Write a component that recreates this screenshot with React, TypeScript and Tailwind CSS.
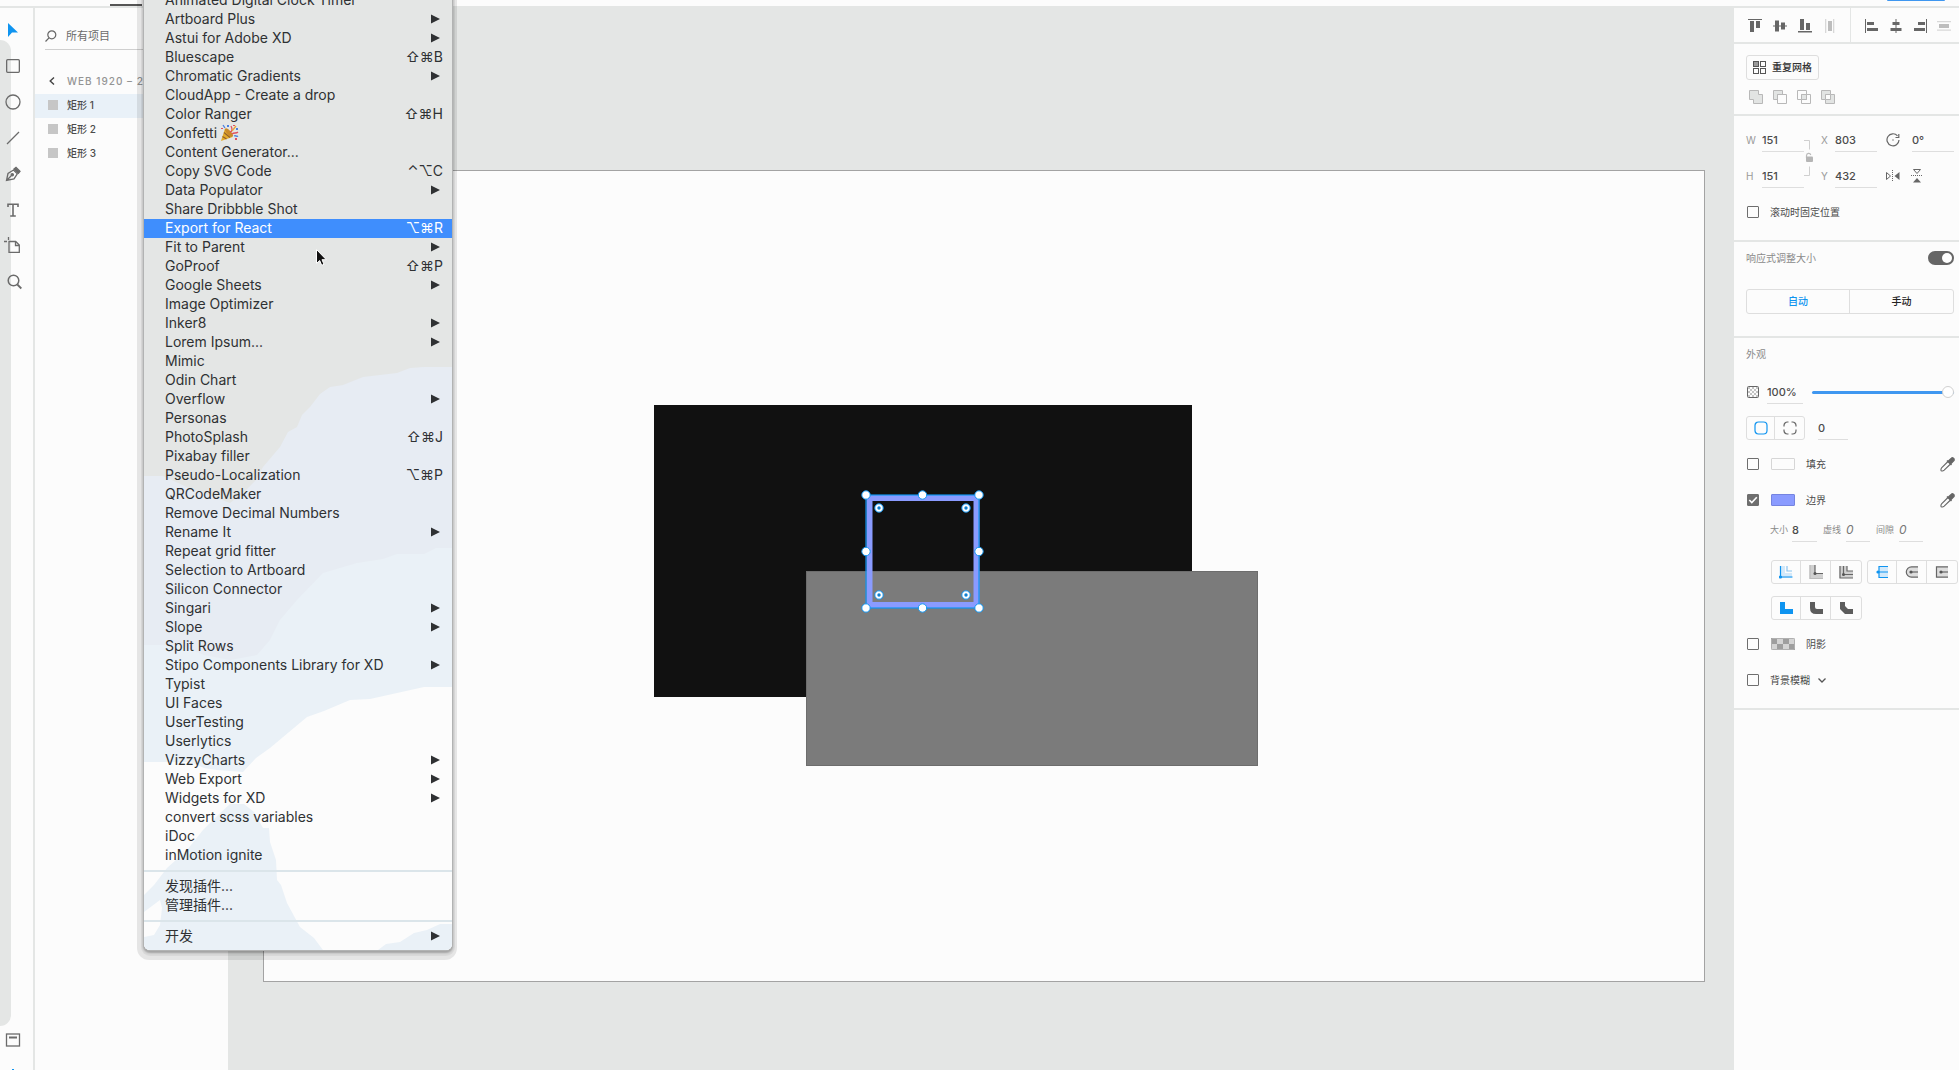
import type { ReactNode } from "react";

type Item = { label: string; keys?: string; sub?: boolean; active?: boolean; party?: boolean };

const plugins: Item[] = [
  { label: "Animated Digital Clock Timer" },
  { label: "Artboard Plus", sub: true },
  { label: "Astui for Adobe XD", sub: true },
  { label: "Bluescape", keys: "⇧⌘B" },
  { label: "Chromatic Gradients", sub: true },
  { label: "CloudApp - Create a drop" },
  { label: "Color Ranger", keys: "⇧⌘H" },
  { label: "Confetti", party: true },
  { label: "Content Generator..." },
  { label: "Copy SVG Code", keys: "⌃⌥C" },
  { label: "Data Populator", sub: true },
  { label: "Share Dribbble Shot" },
  { label: "Export for React", keys: "⌥⌘R", active: true },
  { label: "Fit to Parent", sub: true },
  { label: "GoProof", keys: "⇧⌘P" },
  { label: "Google Sheets", sub: true },
  { label: "Image Optimizer" },
  { label: "Inker8", sub: true },
  { label: "Lorem Ipsum...", sub: true },
  { label: "Mimic" },
  { label: "Odin Chart" },
  { label: "Overflow", sub: true },
  { label: "Personas" },
  { label: "PhotoSplash", keys: "⇧⌘J" },
  { label: "Pixabay filler" },
  { label: "Pseudo-Localization", keys: "⌥⌘P" },
  { label: "QRCodeMaker" },
  { label: "Remove Decimal Numbers" },
  { label: "Rename It", sub: true },
  { label: "Repeat grid fitter" },
  { label: "Selection to Artboard" },
  { label: "Silicon Connector" },
  { label: "Singari", sub: true },
  { label: "Slope", sub: true },
  { label: "Split Rows" },
  { label: "Stipo Components Library for XD", sub: true },
  { label: "Typist" },
  { label: "UI Faces" },
  { label: "UserTesting" },
  { label: "Userlytics" },
  { label: "VizzyCharts", sub: true },
  { label: "Web Export", sub: true },
  { label: "Widgets for XD", sub: true },
  { label: "convert scss variables" },
  { label: "iDoc" },
  { label: "inMotion ignite" },
];

function Popper() {
  return (
    <svg width="19" height="18" viewBox="0 0 19 18" role="img" aria-label="🎉">
      <path d="M1 17 5 4.500Q10 7 12.500 13z" fill="#e3ab2c" />
      <path d="M2.500 12.500l4 2.500M4 8.500l6 5M6 6l5 6" stroke="#94602a" strokeWidth="1.200" />
      <ellipse cx="9" cy="8.600" rx="5.400" ry="2" transform="rotate(48 9 8.600)" fill="#c98a2a" />
      <path d="M10 8c3-1 2-4 1-6M12 10c2-2 4 0 6-2" fill="none" stroke="#e0525f" strokeWidth="1.300" />
      <path d="M3 1l2 3M14 12c2-1 3 1 4 0" fill="none" stroke="#4a7fe0" strokeWidth="1.300" />
      <path d="M12 7l4-5" stroke="#e8a33a" strokeWidth="1.300" />
      <g fill="#4a7fe0"><rect x="7" y="1" width="2" height="2" /><rect x="16" y="4" width="2" height="2" /></g>
      <g fill="#e0525f"><rect x="1" y="4" width="2" height="1" /><rect x="13" y="1" width="2" height="1" /><rect x="15" y="14" width="2" height="2" /></g>
    </svg>
  );
}

function MenuItem({ item }: { item: Item }) {
  return (
    <li role="none">
      <button
        type="button"
        role="menuitem"
        className={
          item.active
            ? "flex h-[19px] w-full items-center bg-[#3f8efd] pb-[2px] pl-[21px] pr-[9px] text-left text-white"
            : "flex h-[19px] w-full items-center pb-[2px] pl-[21px] pr-[9px] text-left"
        }
      >
        <span className="whitespace-nowrap">{item.label}</span>
        {item.party && <span className="ml-[3px]"><Popper /></span>}
        {item.keys && <span className="ml-auto">{item.keys}</span>}
        {item.sub && (
          <svg className="ml-auto mr-[3px]" width="9" height="10" viewBox="0 0 9 10" aria-hidden="true">
            <path d="M0 .5v9L9 5z" fill="currentColor" />
          </svg>
        )}
      </button>
    </li>
  );
}

function MenuRule() {
  return (
    <li role="separator" className="h-3 pt-[5px]">
      <div className="h-[2px] bg-[#dbe5ea]" />
    </li>
  );
}

function PluginMenu() {
  return (
    <div className="absolute -top-[9px] left-[144px] w-[308px] rounded-b-md bg-[#e4e6e5] text-sm leading-[19px] text-[#2f3133] shadow-[0_0_0_1px_#b2b3b3,0_2px_2px_1px_rgba(0,0,0,0.25),0_3px_0_3px_rgba(0,0,0,0.05),-1px_4px_0_6px_rgba(0,0,0,0.09)]">
      <svg className="absolute inset-0 h-full w-full rounded-b-md" viewBox="0 0 308 959" preserveAspectRatio="none" aria-hidden="true">
        <g transform="translate(0 9)">
          <path fill="#e7ecf3" d="M0 476H19L45 488 70 497 86 503 100 492 112 480 119 467 136 447 144 432 153 427 158 415 166 407 176 394 186 387 199 385 219 377 253 373 266 368 280 367H308V950H0z" />
          <path fill="#eaf1f7" d="M0 645H36L60 655 86 660 113 655 126 640 136 620 153 600 179 573 213 563 239 559 253 554H280L292 548H308V950H0z" />
          <path fill="#fcfcfc" d="M0 762H46L60 768 73 770 99 772 112 758 126 748 163 717 180 711 206 700 226 699 253 693 280 687H308V950H0z" />
          <path fill="#eaf1f7" d="M0 895 10 885 23 868 43 850 59 830 73 816 86 804H100L110 812 119 828H125L126 842 132 860 133 880 137 885 143 903 156 927 170 938 179 950H0V937L10 935 16 925 18 908 16 900 0 912zM234 950 242 944 256 942 270 933 283 930 296 924H308V950z" />
        </g>
      </svg>
      <ul role="menu" className="relative pb-1">
        {plugins.map((p) => <MenuItem key={p.label} item={p} />)}
        <MenuRule />
        <MenuItem item={{ label: "发现插件..." }} />
        <MenuItem item={{ label: "管理插件..." }} />
        <MenuRule />
        <MenuItem item={{ label: "开发", sub: true }} />
      </ul>
    </div>
  );
}

function Tool({ name, children }: { name: string; children: ReactNode }) {
  return (
    <button type="button" aria-label={name} className="flex h-9 w-[26px] items-center justify-center">
      <svg width="18" height="18" viewBox="0 0 18 18" fill="none" stroke="#6b6b6b" strokeWidth="1.300">
        {children}
      </svg>
    </button>
  );
}

function Toolbar() {
  return (
    <nav aria-label="工具" className="relative flex w-[35px] shrink-0 flex-col border-r-2 border-[#e4e6e5] pt-1">
      <div className="absolute bottom-11 left-0 top-8 w-[11px] rounded-r-[11px] bg-[#e4e6e5]" />
      <div className="relative flex flex-1 flex-col">
        <Tool name="选择"><path d="M4 2v14l4-4.500h6z" fill="#0f94f0" stroke="none" /></Tool>
        <Tool name="矩形"><rect x="2.650" y="2.650" width="12.700" height="12.700" rx="1" /></Tool>
        <Tool name="椭圆"><circle cx="9" cy="9" r="7" /></Tool>
        <Tool name="直线"><path d="M3 15 15 3" /></Tool>
        <Tool name="钢笔">
          <path d="M2.500 15.500 4 8.500l5.500-3.500 3.800 3.800-3.300 5zM2.500 15.500l5-5" />
          <circle cx="8.300" cy="9.700" r="1.100" fill="#6b6b6b" />
          <path d="m10 4 2-1.600 4 4L14.400 8.300z" fill="#6b6b6b" />
        </Tool>
        <Tool name="文本"><path d="M4 6V3.200h10V6M9 3.200V15M6.200 15h5.600" strokeWidth="1.600" /></Tool>
        <Tool name="画板"><path d="M5 4.500h6.700l3.600 3.600v7.200H5zM11.500 4.500v4h4M4.500 0v3M0 4.500h3" /></Tool>
        <Tool name="缩放"><circle cx="9.500" cy="7.500" r="5.300" strokeWidth="1.500" /><path d="m13.300 11.500 4 4" strokeWidth="1.800" /></Tool>
        <div className="mt-auto pb-3">
          <Tool name="图层"><rect x="2.500" y="3" width="13" height="12" /><path d="M5 6.500h8" strokeWidth="2" /></Tool>
        </div>
        <span className="absolute bottom-0 left-3 h-px w-[2px] bg-[#0f94f0]" />
      </div>
    </nav>
  );
}

function Layers() {
  return (
    <aside className="w-[193px] shrink-0">
      <label className="ml-[10px] mt-[15px] flex h-[27px] items-center border-b border-[#cfcfcf]">
        <svg width="12" height="12" viewBox="0 0 12 12" fill="none" stroke="#666" strokeWidth="1.200" aria-hidden="true">
          <circle cx="6.800" cy="4.800" r="4" /><path d="M4 7.800.5 11.500" />
        </svg>
        <input aria-label="搜索" placeholder="所有项目" className="ml-[9px] w-20 bg-transparent text-[11px] text-[#6b6b6b] outline-none placeholder:text-[#6b6b6b]" />
      </label>
      <button type="button" className="ml-[14px] mt-[18px] flex h-[26px] items-center text-[10px] font-medium tracking-widest text-[#949494]">
        <svg width="6" height="8" viewBox="0 0 6 8" fill="none" stroke="#444" strokeWidth="1.400" aria-hidden="true"><path d="M5 .5 1.200 4 5 7.500" /></svg>
        <span className="ml-3 whitespace-nowrap">WEB 1920 – 2</span>
      </button>
      <ul>
        {["矩形 1", "矩形 2", "矩形 3"].map((n, i) => (
          <li key={n}>
            <button type="button" className={i === 0 ? "flex h-6 w-full items-center bg-[#e9f1f8] pb-[2px] pl-[13px] text-[10px] font-medium text-[#4b4b4b]" : "flex h-6 w-full items-center pb-[2px] pl-[13px] text-[10px] font-medium text-[#4b4b4b]"}>
              <span className="h-[10px] w-[10px] bg-[#c6c6c6]" />
              <span className="ml-[9px]">{n}</span>
            </button>
          </li>
        ))}
      </ul>
    </aside>
  );
}

const handles = [[0, 0], [56.5, 0], [113, 0], [0, 56.5], [113, 56.5], [0, 113], [56.5, 113], [113, 113]];
const radii = [[13, 13], [100, 13], [13, 100], [100, 100]];

function Canvas() {
  return (
    <main className="flex min-w-0 flex-1 bg-[#e4e6e5] pb-[88px] pl-[35px] pr-[27px] pt-[162px]">
      <section aria-label="画板" className="relative flex-1 border border-[#a3a3a3] bg-[#fcfcfc]">
        <div className="absolute left-[390px] top-[234px] h-[292px] w-[538px] bg-[#111]" />
        <div className="absolute left-[542px] top-[400px] h-[195px] w-[452px] border border-[#6d6d6d] bg-[#7b7b7b]" />
        <svg className="absolute left-[592px] top-[314px]" width="133" height="133" viewBox="-10 -10 133 133" aria-label="矩形 1" role="img">
          <rect x="3.500" y="3" width="107" height="107" fill="none" stroke="#8a9bff" strokeWidth="6" />
          <rect x="0" y="0" width="113" height="113" fill="none" stroke="#0f94f0" strokeWidth="1.200" />
          {handles.map(([x, y]) => <circle key={`${x}-${y}`} cx={x} cy={y} r="4.200" fill="#fff" stroke="#0f94f0" />)}
          {radii.map(([x, y]) => (
            <g key={`${x}-${y}`}>
              <circle cx={x} cy={y} r="4.200" fill="#fff" stroke="#0f94f0" />
              <circle cx={x} cy={y} r="1.700" fill="#0f80d0" />
            </g>
          ))}
        </svg>
      </section>
    </main>
  );
}

function Ico({ name, children }: { name: string; children: ReactNode }) {
  return (
    <button type="button" aria-label={name} className="shrink-0">
      <svg width="14" height="14" viewBox="0 0 14 14" fill="#666">{children}</svg>
    </button>
  );
}

function Check({ id, checked }: { id: string; checked?: boolean }) {
  return (
    <span className="ml-px grid h-3 w-3 shrink-0">
      <input id={id} type="checkbox" defaultChecked={checked} className="peer col-start-1 row-start-1 h-3 w-3 appearance-none rounded-[1px] border border-[#6e6e6e] checked:bg-[#6e6e6e]" />
      <svg viewBox="0 0 12 12" className="pointer-events-none invisible col-start-1 row-start-1 h-3 w-3 peer-checked:visible" fill="none" stroke="#fff" strokeWidth="1.600" aria-hidden="true">
        <path d="m2.300 6 2.500 2.600L9.800 3.200" />
      </svg>
    </span>
  );
}

function Field({ label, value, italic }: { label: string; value: string; italic?: boolean }) {
  return (
    <input
      aria-label={label}
      defaultValue={value}
      className={
        italic
          ? "h-6 w-full min-w-0 border-b border-[#dedede] bg-transparent text-xs italic text-[#777] outline-none"
          : "h-6 w-full min-w-0 border-b border-[#dedede] bg-transparent text-[11px] font-medium text-[#4b4b4b] outline-none"
      }
    />
  );
}

function Dropper({ name }: { name: string }) {
  return (
    <button type="button" aria-label={name} className="ml-auto -mr-px">
      <svg width="15" height="15" viewBox="0 0 15 15" fill="none" stroke="#666" strokeWidth="1.100">
        <path d="M8 4.500 1.800 10.700C1 11.600.8 13 1.200 13.800c1 .4 2.200.100 3-.6L10.500 7" />
        <path d="m7 3.500 4.500 4.500M8.500 4l3-2.800c1-1 3.300.8 2.300 2.300L11 6.500z" fill="#666" strokeWidth="1.500" />
      </svg>
    </button>
  );
}

function Seg({ label, children }: { label: string; children: ReactNode }) {
  return (
    <div role="group" aria-label={label} className="flex h-6 shrink-0 divide-x divide-[#dedede] rounded-[3px] border border-[#dedede]">
      {children}
    </div>
  );
}

function Cell({ name, narrow, children }: { name: string; narrow?: boolean; children: ReactNode }) {
  return (
    <button type="button" aria-label={name} className={narrow ? "flex w-[29px] items-center justify-center first:w-7" : "flex w-[30px] items-center justify-center first:w-[29px]"}>
      <svg width="14" height="14" viewBox="0 0 14 14" fill="none" stroke="#666" strokeWidth="1.200">{children}</svg>
    </button>
  );
}

function Heading({ children }: { children: ReactNode }) {
  return <h2 className="text-[10px] text-[#8a8a8a]">{children}</h2>;
}

function Inspector() {
  return (
    <aside className="w-[227px] shrink-0 overflow-hidden border-l-2 border-[#e4e6e5] text-[10px] text-[#4b4b4b]">
      <div className="flex h-9 border-b-2 border-[#e4e6e5] pt-px">
        <div className="flex w-[116px] items-center gap-[11px] pl-[14px]">
          <Ico name="顶对齐"><path d="M0 0h14v1H0zM2 2h4v11H2zM8 2h4v7H8z" /></Ico>
          <Ico name="垂直居中"><path d="M0 6.500h14v1H0zM2 1.500h4v11H2zM8 3.500h4v7H8z" /></Ico>
          <Ico name="底对齐"><path d="M0 12h14v1.500H0zM2 0h4v11H2zM8 4h4v7H8z" /></Ico>
          <Ico name="水平分布"><path d="M2 0h1.300v14H2zM10 0h1.300v14H10z" fill="#d8d8d8" /><path d="M5 2h4v10H5z" fill="#bdbdbd" /></Ico>
        </div>
        <div className="-mt-px flex flex-1 items-center gap-[10px] border-l border-[#e4e6e5] pl-[14px] pt-px">
          <Ico name="左对齐"><path d="M0 0h1v14H0zM2 3h7v3H2zM2 9h11v3H2z" /></Ico>
          <Ico name="水平居中"><path d="M6.500 0h1v14h-1zM3.500 3h7v3h-7zM1.500 9h11v3h-11z" /></Ico>
          <Ico name="右对齐"><path d="M13 0h1v14h-1zM5 3h7v3H5zM1 9h11v3H1z" /></Ico>
          <Ico name="垂直分布"><path d="M0 2h14v1.300H0zM0 10.500h14v1.300H0z" fill="#d8d8d8" /><path d="M2 5h10v4H2z" fill="#bdbdbd" /></Ico>
        </div>
      </div>

      <div className="h-[72px] border-b-2 border-[#e4e6e5] pl-3 pt-[11px]">
        <button type="button" className="flex h-[25px] items-center gap-[6px] rounded-[3px] border border-[#dedede] px-[6px] font-medium text-[#333]">
          <svg width="13" height="13" viewBox="0 0 13 13" fill="none" stroke="#555" aria-hidden="true">
            <rect x=".5" y=".5" width="5" height="5" fill="#999" /><rect x="7.500" y=".5" width="5" height="5" /><rect x=".5" y="7.500" width="5" height="5" /><rect x="7.500" y="7.500" width="5" height="5" />
          </svg>
          <span>重复网格</span>
        </button>
        <div className="mt-[10px] flex gap-[10px] pl-[3px]">
          <Ico name="添加"><path d="M.5.5h9v4h4v9h-9v-4h-4z" fill="#e2e4e3" stroke="#b8b8b8" /></Ico>
          <Ico name="减去"><path d="M.5.5h9v4h-5v5h-4z" fill="#e2e4e3" stroke="#b8b8b8" /><path d="M4.500 4.500h9v9h-9z" fill="none" stroke="#b8b8b8" /></Ico>
          <Ico name="交叉"><path d="M.5.5h9v9h-9zM4.500 4.500h9v9h-9z" fill="none" stroke="#b8b8b8" /><path d="M4.500 4.500h5v5h-5z" fill="#e2e4e3" stroke="#b8b8b8" /></Ico>
          <Ico name="排除重叠"><path d="M.5.5h9v9h-9zM4.500 4.500h9v9h-9z" fill="#e2e4e3" stroke="#b8b8b8" /><path d="M4.500 4.500h5v5h-5z" fill="#fcfcfc" stroke="#b8b8b8" /></Ico>
        </div>
      </div>

      <div className="border-b-2 border-[#e4e6e5] pb-4 pl-3 pr-[5px] pt-3">
        <div className="grid grid-cols-[16px_42px_17px_14px_42px_9px_14px_12px_42px] items-center gap-y-3 text-[#9a9a9a]">
          <span>W</span>
          <Field label="W" value="151" />
          <svg className="row-span-2 self-center" width="11" height="38" viewBox="0 0 11 38" fill="none" stroke="#cfcfcf" aria-label="锁定长宽比" role="img">
            <path d="M0 1.500h5.500v9M5.500 27.500v9H0" />
            <path d="M2.500 19v-2.500a2.200 2.200 0 0 1 4.300-.5" stroke="#bbb" strokeWidth="1.200" />
            <rect x="2" y="17.500" width="7" height="5.500" rx="1" fill="#b5b5b5" stroke="none" />
          </svg>
          <span>X</span>
          <Field label="X" value="803" />
          <span />
          <svg width="14" height="14" viewBox="0 0 14 14" fill="none" stroke="#666" strokeWidth="1.200" aria-hidden="true">
            <path d="M11.500 2.800A6 6 0 1 0 13 7M12.800 1v3.500H9.500" /><circle cx="7" cy="7" r=".7" fill="#666" stroke="none" />
          </svg>
          <span />
          <Field label="旋转" value="0°" />
          <span>H</span>
          <Field label="H" value="151" />
          <span>Y</span>
          <Field label="Y" value="432" />
          <span />
          <div className="col-span-3 flex gap-[10px]">
            <Ico name="水平翻转"><path d="M.5 3.500v7L4.500 7z" fill="none" stroke="#666" /><path d="M13.500 3v8L8.500 7z" /><path d="M6.500 1v12" stroke="#666" strokeDasharray="1 1" /></Ico>
            <Ico name="垂直翻转"><path d="M3.500.5h7L7 4.500z" fill="none" stroke="#666" /><path d="M3 13.500h8L7 9z" /><path d="M1 6.500h12" stroke="#666" strokeDasharray="1 1" /></Ico>
          </div>
        </div>
        <div className="mt-3 flex h-6 items-center gap-[11px]">
          <Check id="fixed" />
          <label htmlFor="fixed">滚动时固定位置</label>
        </div>
      </div>

      <div className="h-24 border-b-2 border-[#e4e6e5] pl-3 pr-[5px]">
        <div className="flex h-8 items-center justify-between">
          <Heading>响应式调整大小</Heading>
          <button type="button" role="switch" aria-checked="true" aria-label="响应式调整大小" className="flex h-[14px] w-[26px] items-center justify-end rounded-full bg-[#666] p-[2px]">
            <span className="h-[10px] w-[10px] rounded-full bg-white" />
          </button>
        </div>
        <div className="mt-[15px] grid h-[25px] grid-cols-2 divide-x divide-[#dedede] rounded-[3px] border border-[#dedede] font-medium">
          <button type="button" className="text-[#0f94f0]">自动</button>
          <button type="button" className="text-[#222]">手动</button>
        </div>
      </div>

      <div className="border-b-2 border-[#e4e6e5] pb-[10px] pl-3 pr-[5px]">
        <div className="mb-1 flex h-8 items-center"><Heading>外观</Heading></div>
        <div className="flex h-9 items-center">
          <svg className="ml-px shrink-0" width="12" height="12" viewBox="0 0 12 12" aria-hidden="true">
            <path d="M1 1h2v2H1zM5 1h2v2H5zM9 1h2v2H9zM3 3h2v2H3zM7 3h2v2H7zM1 5h2v2H1zM5 5h2v2H5zM9 5h2v2H9zM3 7h2v2H3zM7 7h2v2H7zM1 9h2v2H1zM5 9h2v2H5zM9 9h2v2H9z" fill="#c4c4c4" />
            <rect x=".5" y=".5" width="11" height="11" rx="1" fill="none" stroke="#666" />
          </svg>
          <div className="ml-2 w-9 shrink-0"><Field label="不透明度" value="100%" /></div>
          <input type="range" aria-label="不透明度" defaultValue={100} className="ml-[9px] h-3 min-w-0 flex-1 appearance-none bg-transparent [&::-webkit-slider-runnable-track]:h-[3px] [&::-webkit-slider-runnable-track]:rounded-full [&::-webkit-slider-runnable-track]:bg-[#3f97f0] [&::-webkit-slider-thumb]:-mt-[5px] [&::-webkit-slider-thumb]:h-3 [&::-webkit-slider-thumb]:w-3 [&::-webkit-slider-thumb]:appearance-none [&::-webkit-slider-thumb]:rounded-full [&::-webkit-slider-thumb]:border [&::-webkit-slider-thumb]:border-[#d0d0d0] [&::-webkit-slider-thumb]:bg-white" />
        </div>
        <div className="flex h-9 items-center">
          <Seg label="圆角">
            <Cell name="所有圆角相同" narrow><rect x="1" y="1" width="12" height="12" rx="3.500" stroke="#0f94f0" /></Cell>
            <Cell name="每个圆角不同" narrow><path d="M1 5.500V4.500A3.500 3.500 0 0 1 4.500 1h1M8.500 1h1A3.500 3.500 0 0 1 13 4.500v1M13 8.500v1A3.500 3.500 0 0 1 9.500 13h-1M5.500 13h-1A3.500 3.500 0 0 1 1 9.500v-1" /></Cell>
          </Seg>
          <div className="ml-[13px] w-[30px]"><Field label="圆角半径" value="0" /></div>
        </div>
        <div className="flex h-9 items-center">
          <Check id="fill" />
          <span className="ml-3 h-3 w-6 rounded-[1px] border border-[#d6d6d6]" />
          <label htmlFor="fill" className="ml-[11px]">填充</label>
          <Dropper name="吸取填充颜色" />
        </div>
        <div className="flex h-9 items-center">
          <Check id="border" checked />
          <span className="ml-3 h-3 w-6 rounded-[1px] border border-[#7584e0] bg-[#8a9bff]" />
          <label htmlFor="border" className="ml-[11px]">边界</label>
          <Dropper name="吸取边界颜色" />
        </div>
        <div className="flex h-9 items-start pl-6 text-[9px] text-[#8a8a8a]">
          <span className="w-[22px] leading-6">大小</span><div className="w-[25px]"><Field label="大小" value="8" /></div>
          <span className="ml-[6px] w-[23px] leading-6">虚线</span><div className="w-6"><Field label="虚线" value="0" italic /></div>
          <span className="ml-[6px] w-[23px] leading-6">间隙</span><div className="w-6"><Field label="间隙" value="0" italic /></div>
        </div>
        <div className="flex h-9 items-center gap-[5px] pl-[25px]">
          <Seg label="描边位置">
            <Cell name="内部描边"><path d="M1 1h5v7h7v5H1z" fill="#d3e9fa" stroke="none" /><path d="M8 1v5h5" stroke="#8ac4f0" /><path d="M1.500 1v11h12" stroke="#0f94f0" /><circle cx="1.500" cy="12" r="1.600" fill="#0f94f0" stroke="none" /></Cell>
            <Cell name="外部描边"><path d="M.5 0H6v8.500h8V14H.5z" fill="#d0d0d0" stroke="none" /><path d="M1 0v13.500h13" stroke="#bbb" /><path d="M6 0v8.500h8" /><circle cx="6" cy="8.500" r="1.500" fill="#555" stroke="none" /></Cell>
            <Cell name="中心描边"><path d="M.5 1H8v5h6v7H.5z" fill="#d0d0d0" stroke="none" /><path d="M8 1v5h6M1 1v12h13M4.500 1v8.500H14" /><circle cx="4.500" cy="9.500" r="1.500" fill="#555" stroke="none" /></Cell>
          </Seg>
          <Seg label="端点">
            <Cell name="平头端点"><path d="M4 1.500h9v11H4z" fill="#d3e9fa" stroke="none" /><path d="M13 1.500H4v11h9M2 7h11" stroke="#0f94f0" /><circle cx="3" cy="7" r="1.600" fill="#0f94f0" stroke="none" /></Cell>
            <Cell name="圆头端点"><path d="M13 1.800H6.500a5.200 5.200 0 0 0 0 10.400H13" fill="#ddd" /><path d="M6 7h7" /><circle cx="6" cy="7" r="1.600" fill="#555" stroke="none" /></Cell>
            <Cell name="方头端点"><path d="M13 1.800H1.500v10.400H13" fill="#ddd" /><path d="M6 7h7" /><circle cx="6" cy="7" r="1.600" fill="#555" stroke="none" /></Cell>
          </Seg>
        </div>
        <div className="flex h-9 items-center pl-[25px]">
          <Seg label="连接">
            <Cell name="斜接连接"><path d="M1 1h5v7h8v5H1z" fill="#0f94f0" stroke="none" /></Cell>
            <Cell name="圆角连接"><path d="M1 1h5v5q0 2 2 2h6v5H7q-6 0-6-6z" fill="#5c5c5c" stroke="none" /></Cell>
            <Cell name="斜角连接"><path d="M1 1h5v4l3 3h5v5H6L1 8z" fill="#5c5c5c" stroke="none" /></Cell>
          </Seg>
        </div>
        <div className="flex h-9 items-center">
          <Check id="shadow" />
          <svg className="ml-3" width="24" height="12" viewBox="0 0 24 12" aria-hidden="true">
            <rect width="24" height="12" rx="1" fill="#d4d4d4" />
            <path d="M0 0h6v6H0zM12 0h6v6h-6zM6 6h6v6H6zM18 6h6v6h-6z" fill="#9e9e9e" />
            <rect x=".5" y=".5" width="23" height="11" rx="1" fill="none" stroke="#b0b0b0" />
          </svg>
          <label htmlFor="shadow" className="ml-[11px]">阴影</label>
        </div>
        <div className="flex h-9 items-center">
          <Check id="blur" />
          <label htmlFor="blur" className="ml-[11px]">背景模糊</label>
          <svg className="ml-2" width="8" height="5" viewBox="0 0 8 5" fill="none" stroke="#555" strokeWidth="1.300" aria-hidden="true"><path d="m.5.5 3.500 3.500L7.500.5" /></svg>
        </div>
      </div>
    </aside>
  );
}

export default function App() {
  return (
    <div className="relative flex h-screen flex-col overflow-hidden bg-[#fcfcfc] font-['Inter','Noto_Sans_CJK_SC',sans-serif]">
      <header className="flex h-2 shrink-0 items-start justify-between border-b-2 border-[#e4e6e5] pl-[110px] pr-[14px]">
        <span className="mt-1 h-[2px] w-8 bg-[#555]" />
        <span className="h-px w-[58px] rounded-b bg-[#3f97f0]" />
      </header>
      <div className="flex min-h-0 flex-1">
        <Toolbar />
        <Layers />
        <Canvas />
        <Inspector />
      </div>
      <PluginMenu />
      <svg className="absolute left-[315px] top-[248px]" width="13" height="19" viewBox="0 0 13 19" aria-hidden="true">
        <path d="M1.500 1.500v14l3.200-3 2 4.800 2.300-1-2-4.600h4.300z" fill="#111" stroke="#fff" />
      </svg>
    </div>
  );
}
